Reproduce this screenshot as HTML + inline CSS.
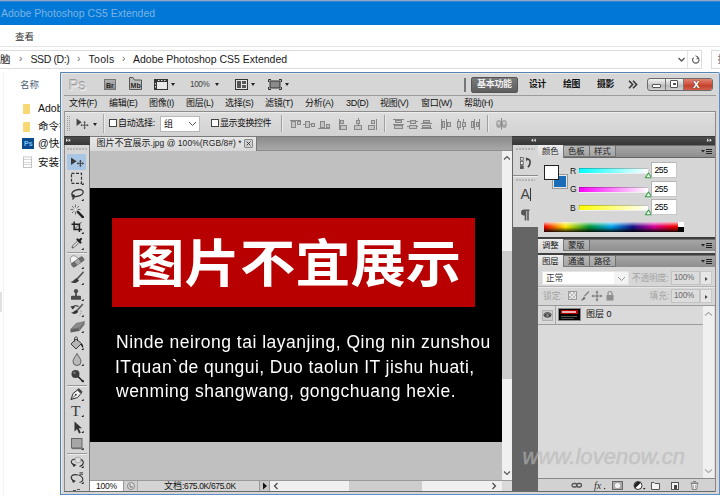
<!DOCTYPE html>
<html lang="zh-CN">
<head>
<meta charset="utf-8">
<title>Adobe Photoshop CS5 Extended</title>
<style>
*{box-sizing:border-box;margin:0;padding:0}
html,body{width:720px;height:496px;overflow:hidden;background:#fff}
body{position:relative;font-family:"Liberation Sans","Noto Sans CJK SC",sans-serif;font-size:12px;color:#000}
.a{position:absolute}
.t{position:absolute;white-space:nowrap;line-height:1}
/* explorer */
#topstrip{left:0;top:0;width:720px;height:2px;background:linear-gradient(#8fa9c4 0 1px,#2f86d6 1px 2px)}
#title{left:0;top:1px;width:720px;height:24px;background:#0078d7}
#title .t{left:1px;top:7px;font-size:10.5px;color:#7db3e4}
#menu .t{left:15px;top:31.6px;font-size:9.5px;color:#333}
#sep1{left:0;top:46px;width:720px;height:1px;background:#e6e6e6}
#addr{left:-2px;top:50px;width:704px;height:19px;border:1px solid #dcdcdc;background:#fff}
#addrdiv{left:687px;top:51px;width:1px;height:17px;background:#e4e4e4}
#search{left:711px;top:50px;width:20px;height:19px;border:1px solid #dcdcdc;background:#fff}
.crumb{top:54px;font-size:10.5px;color:#1a1a1a}
.chev{top:54px;font-size:10px;color:#666}
.li{left:38px;font-size:10.5px;color:#111}
/* photoshop */
#ps{left:60px;top:72px;width:660px;height:423px;background:#d6d6d6;border:1px solid #5f8fc4;border-top-color:#5384b4;border-left-color:#4a82c0;border-radius:0 2px 0 0;box-shadow:inset 1px 1px 0 #ece8e4}
.mi{top:99px;font-size:9px;color:#111;letter-spacing:-0.3px}
.ws{font-size:8.8px;letter-spacing:-0.3px;color:#111;font-weight:bold}
.lat{will-change:transform;font-size:17.5px;letter-spacing:0.5px;color:#fff;font-family:'Liberation Sans',sans-serif}
.sl{left:579px;width:69px;height:4.600px;box-shadow:inset 0 0.800px 0 rgba(0,0,0,0.320),inset 0.600px 0 0 rgba(0,0,0,0.200),0 0.800px 0 #f4f4f4}
.nb{left:651px;width:26px;height:16px;background:#fff;border:1px solid #b4b4b4;border-bottom-color:#c8c8c8;border-right-color:#c8c8c8}
.nbt{left:654.5px;font-size:8.6px;letter-spacing:-0.45px;color:#000}
.tri{width:0;height:0;border-left:2.7px solid transparent;border-right:2.7px solid transparent;border-top:3.5px solid #222;margin-left:0.3px}
.tabtxt{font-size:8.4px;color:#222}
</style>
</head>
<body>
<!-- Explorer window behind -->
<div class="a" id="title"><span class="t">Adobe Photoshop CS5 Extended</span></div>
<div class="a" id="topstrip"></div>
<div id="menu"><span class="t">查看</span></div>
<div class="a" id="sep1"></div>
<div class="a" id="addr"></div>
<div class="a" id="addrdiv"></div>
<div class="a" id="search"></div>
<span class="t" style="left:717.5px;top:55px;font-size:10px;color:#777">搜索</span>
<span class="t crumb" style="left:0px">脑</span>
<span class="t chev" style="left:19px">›</span>
<span class="t crumb" style="left:30.5px;letter-spacing:-0.4px">SSD (D:)</span>
<span class="t chev" style="left:77px">›</span>
<span class="t crumb" style="left:88.5px;letter-spacing:0.3px">Tools</span>
<span class="t chev" style="left:122px">›</span>
<span class="t crumb" style="left:133px">Adobe Photoshop CS5 Extended</span>
<svg class="a" style="left:676px;top:55px" width="26" height="10" viewBox="0 0 26 10"><path d="M2.5 3 L5.5 6 L8.5 3" fill="none" stroke="#555" stroke-width="1.3"/><path d="M21.5 2.2 A3.2 3.2 0 1 1 17.6 2.6" fill="none" stroke="#555" stroke-width="1.1"/><path d="M19.5 0.8 L22 2 L20.8 4.3" fill="none" stroke="#555" stroke-width="1"/></svg>
<span class="t" style="left:20px;top:80px;font-size:9.5px;color:#4c607a">名称</span>
<div class="a" style="left:23px;top:104px;width:7px;height:10px;background:#f7d873;border-radius:1px"></div>
<span class="t li" style="top:103px">Adobe</span>
<div class="a" style="left:23px;top:122px;width:7px;height:10px;background:#f7d873;border-radius:1px"></div>
<span class="t li" style="top:121px">命令行</span>
<div class="a" style="left:22px;top:138px;width:12px;height:11px;background:#0c4a8e"><span class="t" style="left:2px;top:2px;font-size:7px;color:#7cc4f5;font-weight:bold">Ps</span></div>
<span class="t li" style="top:138px">@快速</span>
<div class="a" style="left:23px;top:156px;width:9px;height:12px;background:repeating-linear-gradient(#fff 0 1.500px,#d8d8d8 1.500px 2.500px);border:1px solid #c4c4c4;border-top-width:2px;border-top-color:#e4e4e4"></div>
<span class="t li" style="top:157px">安装说明</span>
<div class="a" style="left:0;top:292px;width:2px;height:20px;background:#e0e0e0"></div>
<div class="a" style="left:3px;top:72px;width:1px;height:424px;background:#f4f4f4"></div>

<!-- Photoshop window -->
<div class="a" id="ps"></div>
<!-- app bar -->
<div class="a" style="left:64px;top:95px;width:652px;height:1px;background:#9c9c9c"></div>
<span class="t" style="left:68.800px;top:77.300px;font-size:15px;color:#c8c8c8;letter-spacing:-0.300px;text-shadow:-0.600px -0.600px 0 #9a9a9a,0.700px 0.700px 0 #f2f2f2">Ps</span>
<div class="a" style="left:104px;top:79px;width:12px;height:11px;background:linear-gradient(#b2b2b2,#8a8a8a);border:1px solid #767676"><span class="t" style="left:1px;top:1.5px;font-size:7px;font-weight:bold;color:#2a2a2a">Br</span></div>
<svg class="a" style="left:129px;top:77px" width="14" height="13" viewBox="0 0 14 13"><path d="M0.5 12.5 V0.5 H4 L5.5 3 H12.5 V12.5 Z" fill="#bdbdbd" stroke="#555" stroke-width="1"/><text x="1.6" y="10.6" font-family="Liberation Sans, sans-serif" font-size="7" font-weight="bold" fill="#2a2a2a">Mb</text></svg>
<svg class="a" style="left:154px;top:79px" width="14" height="11" viewBox="0 0 14 11"><rect x="0.5" y="0.5" width="13" height="10" fill="#e8e8e8" stroke="#333" stroke-width="1"/><rect x="0" y="0" width="14" height="3" fill="#333"/><rect x="0" y="0" width="3" height="11" fill="#333"/><rect x="1" y="4" width="1" height="1.5" fill="#ddd"/><rect x="1" y="7" width="1" height="1.5" fill="#ddd"/><rect x="4" y="1" width="1.5" height="1" fill="#ddd"/><rect x="7" y="1" width="1.5" height="1" fill="#ddd"/><rect x="10" y="1" width="1.5" height="1" fill="#ddd"/></svg>
<div class="a tri" style="left:171px;top:83px"></div>
<span class="t" style="left:190px;top:80.500px;font-size:8.200px;letter-spacing:-0.400px;color:#444">100%</span>
<div class="a tri" style="left:215px;top:83px"></div>
<svg class="a" style="left:235px;top:79px" width="13" height="11" viewBox="0 0 13 11"><rect x="0.5" y="0.5" width="12" height="10" fill="#e4e4e4" stroke="#333"/><rect x="2" y="2" width="4" height="7" fill="#555"/><rect x="7" y="2" width="4" height="3" fill="#555"/><rect x="7" y="6" width="4" height="3" fill="#555"/></svg>
<div class="a tri" style="left:251px;top:83px"></div>
<svg class="a" style="left:268px;top:79px" width="14" height="11" viewBox="0 0 14 11"><rect x="2" y="2" width="10" height="7" fill="#8a8a8a" stroke="#333"/><path d="M0.5 3V0.5H3 M11 0.5H13.5V3 M13.5 8V10.5H11 M3 10.5H0.5V8" fill="none" stroke="#333"/></svg>
<div class="a tri" style="left:285px;top:83px"></div>
<div class="a" style="left:464px;top:78px;width:2px;height:14px;background:#777"></div>
<div class="a" style="left:471px;top:77px;width:47px;height:16px;background:linear-gradient(#7a7a7a,#5e5e5e);border:1px solid #555;border-radius:2px"></div>
<span class="t ws" style="left:477px;top:80px;color:#f2f2f2;font-size:9px;letter-spacing:-0.300px">基本功能</span>
<span class="t ws" style="left:529px;top:80px">设计</span>
<span class="t ws" style="left:563px;top:80px">绘图</span>
<span class="t ws" style="left:597px;top:80px">摄影</span>
<svg class="a" style="left:628px;top:80px" width="10" height="9" viewBox="0 0 10 9"><path d="M1 0.8 L4.6 4.5 L1 8.2 M5 0.8 L8.6 4.5 L5 8.2" fill="none" stroke="#333" stroke-width="1.5"/></svg>
<!-- window buttons -->
<div class="a" style="left:647px;top:78px;width:66px;height:13px;border:1px solid #6b6b6b;border-radius:3px;background:linear-gradient(#f4f4f4,#c9c9c9 50%,#b4b4b4 50%,#d0d0d0)"></div>
<div class="a" style="left:683px;top:79px;width:29px;height:11px;border-radius:0 2px 2px 0;background:linear-gradient(#e0826f,#d0503c 50%,#c03a26 50%,#d2604a)"></div>
<div class="a" style="left:665px;top:79px;width:1px;height:11px;background:#777"></div>
<div class="a" style="left:683px;top:79px;width:1px;height:11px;background:#777"></div>
<div class="a" style="left:652px;top:84px;width:9px;height:4px;background:#fff;border:1px solid #555;border-radius:1px"></div>
<div class="a" style="left:670px;top:80px;width:8px;height:8px;background:#fff;border:1px solid #555;border-radius:1px"></div>
<div class="a" style="left:673px;top:83px;width:3px;height:2px;background:#555"></div>
<span class="t" style="left:693px;top:78px;font-size:12px;font-weight:bold;color:#fff;text-shadow:0 0 1px #5a2018,0 0 1px #5a2018">x</span>
<!-- menu bar -->
<span class="t mi" style="left:69px">文件(F)</span>
<span class="t mi" style="left:109px">编辑(E)</span>
<span class="t mi" style="left:149px">图像(I)</span>
<span class="t mi" style="left:186px">图层(L)</span>
<span class="t mi" style="left:225px">选择(S)</span>
<span class="t mi" style="left:265px">滤镜(T)</span>
<span class="t mi" style="left:305px">分析(A)</span>
<span class="t mi" style="left:346px">3D(D)</span>
<span class="t mi" style="left:380px">视图(V)</span>
<span class="t mi" style="left:421px">窗口(W)</span>
<span class="t mi" style="left:464px">帮助(H)</span>
<!-- options bar -->
<div class="a" style="left:64px;top:111px;width:652px;height:25px;background:linear-gradient(#dedede,#d2d2d2);border-top:1px solid #8c8c8c;border-left:1px solid #9a9a9a;border-right:1px solid #9a9a9a"></div>
<div class="a" style="left:65px;top:112px;width:650px;height:1px;background:#ececec"></div>
<div class="a" style="left:67px;top:116px;width:1px;height:16px;background:repeating-linear-gradient(#999 0 1px,transparent 1px 2px)"></div>
<div class="a" style="left:69px;top:116px;width:1px;height:16px;background:repeating-linear-gradient(#999 0 1px,transparent 1px 2px)"></div>
<svg class="a" style="left:75.500px;top:118px" width="13" height="11" viewBox="0 0 15 13"><path d="M0.5 0.5 V9.5 L6.5 5 Z" fill="#444"/><path d="M10 4.5 V12.5 M6 8.5 H14" stroke="#444" stroke-width="1" fill="none"/><path d="M10 3.6 L8.6 5.4 H11.4Z M10 13 L8.6 11.4 H11.4Z M5.2 8.5 L6.9 7.2 V9.8Z M14.8 8.5 L13.1 7.2 V9.8Z" fill="#444"/></svg>
<div class="a tri" style="left:93px;top:123px;border-left-width:2.5px;border-right-width:2.5px;border-top-width:3px"></div>
<div class="a" style="left:103px;top:114px;width:1px;height:19px;background:#aaa"></div>
<div class="a" style="left:104px;top:114px;width:1px;height:19px;background:#ececec"></div>
<div class="a" style="left:109px;top:119px;width:8px;height:8px;background:#fff;border:1px solid #444"></div>
<span class="t" style="left:118px;top:119px;font-size:9px;letter-spacing:-0.3px;color:#111">自动选择:</span>
<div class="a" style="left:160px;top:116px;width:40px;height:16px;background:#fff;border:1px solid #b8b8b8"></div>
<span class="t" style="left:164px;top:120px;font-size:9px;color:#111">组</span>
<svg class="a" style="left:188px;top:121px" width="9" height="6" viewBox="0 0 9 6"><path d="M1 1 L4.5 4.5 L8 1" fill="none" stroke="#555" stroke-width="1"/></svg>
<div class="a" style="left:211px;top:119px;width:8px;height:8px;background:#fff;border:1px solid #444"></div>
<span class="t" style="left:220px;top:119px;font-size:9px;letter-spacing:-0.5px;color:#111">显示变换控件</span>
<div class="a" style="left:281px;top:115px;width:1px;height:17px;background:#a0a0a0"></div>
<div class="a" style="left:282px;top:115px;width:1px;height:17px;background:#eaeaea"></div>
<div class="a" style="left:384px;top:115px;width:1px;height:17px;background:#a0a0a0"></div>
<div class="a" style="left:385px;top:115px;width:1px;height:17px;background:#eaeaea"></div>
<div class="a" style="left:487px;top:115px;width:1px;height:17px;background:#a0a0a0"></div>
<div class="a" style="left:488px;top:115px;width:1px;height:17px;background:#eaeaea"></div>
<svg class="a" style="left:288px;top:117px" width="224" height="14" viewBox="0 0 224 14" shape-rendering="crispEdges">
<g fill="#c4c4c4" stroke="#888" stroke-width="1">
<!-- align top -->
<path d="M2 3.5H13" fill="none"/><rect x="3.5" y="4.5" width="4" height="6"/><rect x="9.5" y="4.5" width="3" height="3"/>
<!-- align vcenter -->
<path d="M15 7.5H27" fill="none"/><rect x="17.500" y="4.500" width="4" height="6"/><rect x="23.500" y="6" width="3" height="3"/>
<!-- align bottom -->
<path d="M30 11.500H42" fill="none"/><rect x="32.500" y="4.500" width="4" height="6"/><rect x="38.500" y="7.500" width="3" height="3"/>
<!-- align left -->
<path d="M51.500 2V13" fill="none"/><rect x="52.500" y="3.500" width="3" height="3"/><rect x="52.500" y="8.500" width="6" height="4"/>
<!-- align hcenter -->
<path d="M70 1V13" fill="none"/><rect x="68.500" y="3.500" width="3" height="3"/><rect x="66.500" y="8.500" width="7" height="4"/>
<!-- align right -->
<path d="M88 2V13" fill="none"/><rect x="83.500" y="3.500" width="3" height="3"/><rect x="80.500" y="8.500" width="6" height="4"/>
<!-- distribute top -->
<path d="M105 2.500H116 M105 7.500H116" fill="none"/><rect x="107.500" y="3.500" width="6" height="2"/><rect x="106.500" y="8.500" width="8" height="3"/>
<!-- distribute vcenter -->
<path d="M119 4.500H130 M119 9.500H130" fill="none"/><rect x="122" y="3" width="5" height="3"/><rect x="121" y="8" width="7" height="3"/>
<!-- distribute bottom -->
<path d="M133 6.500H144 M133 11.500H144" fill="none"/><rect x="135.500" y="3.500" width="6" height="2"/><rect x="134.500" y="8.500" width="8" height="2"/>
<!-- distribute left -->
<path d="M153.500 2V13 M158.500 2V13" fill="none"/><rect x="154.500" y="4.500" width="2" height="6"/><rect x="159.500" y="5.500" width="3" height="4"/>
<!-- distribute hcenter -->
<path d="M170.500 2V13 M175.500 2V13" fill="none"/><rect x="169" y="4.500" width="3" height="6"/><rect x="174" y="5.500" width="3" height="4"/>
<!-- distribute right -->
<path d="M186.500 2V13 M191.500 2V13" fill="none"/><rect x="183.500" y="4.500" width="2" height="6"/><rect x="188.500" y="5.500" width="2" height="4"/>
</g>
<g shape-rendering="auto"><ellipse cx="210.800" cy="7" rx="2.700" ry="4" fill="#a4a4a4"/><ellipse cx="216.200" cy="7" rx="2.700" ry="4" fill="#a4a4a4"/><ellipse cx="210.800" cy="6" rx="1.300" ry="1.500" fill="#d0d0d0"/><ellipse cx="216.200" cy="6" rx="1.300" ry="1.500" fill="#d0d0d0"/><path d="M213.500 1V12.500" stroke="#777" stroke-width="0.800"/></g>
</svg>

<!-- headers & tab bar -->
<div class="a" style="left:64px;top:136px;width:26px;height:9px;background:linear-gradient(#4c4c4c,#363636);border-top:1px solid #3a3a3a"></div>
<svg class="a" style="left:66px;top:138px" width="6" height="5" viewBox="0 0 6 5"><path d="M0 0.500L2.200 2.300L0 4.100Z M2.600 0.500L4.800 2.300L2.600 4.100Z" fill="#ddd"/></svg>
<div class="a" style="left:90px;top:136px;width:422px;height:15px;background:linear-gradient(#8c8c8c,#a8a8a8);border-top:1px solid #7a7a7a;border-bottom:1px solid #8e8e8e"></div>
<div class="a" style="left:90px;top:137px;width:167px;height:14px;background:linear-gradient(#e8e8e8,#d8d8d8);border-right:1px solid #777"></div>
<span class="t" style="left:96.5px;top:139px;font-size:9px;color:#222">图片不宜展示<span style="font-size:8.5px;letter-spacing:0.04px">.jpg @ 100%(RGB/8#) *</span></span>
<div class="a" style="left:244px;top:139px;width:9px;height:9px;border:1px solid #8a8a8a;background:#d2d2d2;border-radius:1px"></div>
<svg class="a" style="left:244px;top:139px" width="9" height="9" viewBox="0 0 9 9"><path d="M2.500 2.500L6.500 6.500M6.500 2.500L2.500 6.500" stroke="#333" stroke-width="0.900"/></svg>

<!-- canvas -->
<div class="a" style="left:89.500px;top:151px;width:412px;height:329px;background:#c0c0c0"></div>
<div class="a" style="left:89.500px;top:188px;width:412px;height:254px;background:#000"></div>
<div class="a" style="left:112px;top:218px;width:363px;height:89px;background:#b90000"></div>
<span class="t" id="big" style="left:129.3px;top:239px;font-size:55.300px;transform:scaleY(0.925);transform-origin:0 0;font-weight:bold;color:#fff;font-family:'Liberation Sans','Noto Sans CJK SC',sans-serif">图片不宜展示</span>
<span class="t lat" style="left:115.5px;top:334.4px">Ninde neirong tai layanjing, Qing nin zunshou</span>
<span class="t lat" style="left:115px;top:358.6px;letter-spacing:0.44px">ITquan`de qungui, Duo taolun IT jishu huati,</span>
<span class="t lat" style="left:116px;top:382.8px">wenming shangwang, gongchuang hexie.</span>
<!-- v scrollbar -->
<div class="a" style="left:501.500px;top:151px;width:10.500px;height:329px;background:#f0f0f0"></div>
<div class="a" style="left:501.500px;top:251px;width:10.500px;height:127.500px;background:#cdcdcd"></div>
<svg class="a" style="left:503px;top:155px" width="8" height="6" viewBox="0 0 8 6"><path d="M1 4.500L4 1.500L7 4.500" fill="none" stroke="#555" stroke-width="1.200"/></svg>
<svg class="a" style="left:503px;top:470px" width="8" height="6" viewBox="0 0 8 6"><path d="M1 1.500L4 4.500L7 1.500" fill="none" stroke="#555" stroke-width="1.200"/></svg>
<!-- status bar -->
<div class="a" style="left:90px;top:480px;width:422px;height:11px;background:#d4d4d4;border-top:1px solid #9a9a9a"></div>
<div class="a" style="left:90px;top:481px;width:34px;height:10px;background:#fff;border-right:1px solid #999"></div>
<span class="t" style="left:96px;top:482px;font-size:8.500px;letter-spacing:-0.200px;color:#111">100%</span>
<div class="a" style="left:124px;top:481px;width:14px;height:10px;background:#d0d0d0;border-right:1px solid #aaa"></div>
<svg class="a" style="left:126px;top:481px" width="10" height="10" viewBox="0 0 10 10"><circle cx="5" cy="5" r="3.500" fill="#ddd" stroke="#888"/><path d="M4 3V6H7" fill="none" stroke="#777"/></svg>
<span class="t" style="left:164px;top:482px;font-size:9px;color:#111">文档<span style="font-size:8.500px;letter-spacing:-0.350px">:675.0K/675.0K</span></span>
<div class="a" style="left:259px;top:481px;width:11px;height:10px;background:#c8c8c8;border-left:1px solid #999;border-right:1px solid #999"></div>
<svg class="a" style="left:262px;top:482px" width="6" height="8" viewBox="0 0 6 8"><path d="M1 0.500L5 4L1 7.500Z" fill="#111"/></svg>
<div class="a" style="left:270px;top:481px;width:232px;height:10px;background:#f0f0f0"></div>
<div class="a" style="left:349px;top:481px;width:73px;height:10px;background:#cdcdcd"></div>
<svg class="a" style="left:273px;top:482px" width="6" height="8" viewBox="0 0 6 8"><path d="M4.500 1L1.500 4L4.500 7" fill="none" stroke="#444" stroke-width="1.200"/></svg>
<svg class="a" style="left:491px;top:482px" width="6" height="8" viewBox="0 0 6 8"><path d="M1.500 1L4.500 4L1.500 7" fill="none" stroke="#444" stroke-width="1.200"/></svg>
<div class="a" style="left:502px;top:481px;width:10px;height:10px;background:#dadada"></div>

<!-- toolbox -->
<div class="a" style="left:64px;top:145px;width:26px;height:346px;background:#d6d6d6;border-left:1px solid #8a8a8a;border-right:1px solid #7c7c7c"></div>
<div class="a" style="left:67px;top:147.500px;width:20px;height:2px;background:repeating-linear-gradient(90deg,#b2b2b2 0 2px,transparent 2px 3px)"></div>
<svg class="a" style="left:64px;top:145px" width="26" height="346" viewBox="0 0 26 346"><rect x="3" y="9" width="19" height="16" fill="#a9c7e4"/><path d="M7 12.600V20L12.600 16.300Z" fill="#3a3a3a"/><path d="M16.400 15.600V21.200M13.600 18.400H19.200" stroke="#3a3a3a" stroke-width="0.900" fill="none"/><path d="M16.400 14.800L15.100 16.400H17.700Z M16.400 22L15.100 20.400H17.700Z M12.800 18.400L14.400 17.100V19.700Z M20 18.400L18.400 17.100V19.700Z" fill="#3a3a3a"/><rect x="7.500" y="28.300" width="10" height="10" fill="none" stroke="#333" stroke-width="1.200" stroke-dasharray="3 1.500"/><path d="M17.400 40L19.600 40L19.600 37.8Z" fill="#111"/><g transform="translate(7,44)" fill="none" stroke="#333" stroke-width="1.300"><ellipse cx="6.500" cy="4" rx="5.800" ry="3.300" transform="rotate(-14 6.500 4)"/><path d="M2.500 6.500C3.500 7.500 3 9 1.500 10.500"/><circle cx="2.200" cy="7" r="1" /></g><path d="M17.400 56L19.600 56L19.600 53.8Z" fill="#111"/><g transform="translate(6,59)"><path d="M7.800 7.800L12.600 12.800" stroke="#222" stroke-width="2.400" stroke-linecap="round"/><g stroke="#666" stroke-width="1"><path d="M5.500 0.500V3M5.500 8V10.500M0.500 5.500H3M8 5.500H10.500M2 2L3.700 3.700M9 2L7.300 3.700M2 9L3.700 7.300"/></g><circle cx="5.500" cy="5.500" r="1.600" fill="#eee" stroke="#999" stroke-width="0.600"/></g><path d="M17.400 73L19.600 73L19.600 70.8Z" fill="#111"/><g transform="translate(7.500,76.500) scale(0.880)" fill="none" stroke="#222" stroke-width="1.700"><path d="M3 0V9H12"/><path d="M0 3H9V12"/><path d="M11.500 0.500L3.500 8.500" stroke-width="0.800"/></g><path d="M17.400 89L19.600 89L19.600 86.8Z" fill="#111"/><g transform="translate(7,92)"><path d="M1 11L1.500 9L7 3.500L8.500 5L3 10.500Z" fill="#e6e6e6" stroke="#444" stroke-width="0.800"/><path d="M6.500 2.500L9.500 5.500M8 4L10 2" stroke="#222" stroke-width="2.200" stroke-linecap="round"/></g><path d="M17.400 105L19.600 105L19.600 102.8Z" fill="#111"/><path d="M3 107.500H23" stroke="#9a9a9a"/><path d="M3 108.500H23" stroke="#ececec"/><g transform="translate(5,110)"><ellipse cx="5.500" cy="5.500" rx="4" ry="5" fill="#f4f4f4" stroke="#888" stroke-width="0.800" transform="rotate(-30 5.500 5.500)"/><g transform="rotate(-35 8.500 7)"><rect x="2" y="4.800" width="13.500" height="4.600" rx="1.500" fill="#6e6e6e" stroke="#444" stroke-width="0.500"/><rect x="6.500" y="4.800" width="4.500" height="4.600" fill="#a8a8a8"/></g></g><path d="M17.400 124L19.600 124L19.600 121.8Z" fill="#111"/><g transform="translate(6,127)"><path d="M13 0.500L7.500 6.500" stroke="#555" stroke-width="1.800" stroke-linecap="round"/><path d="M0.500 10C3 10 4 7.500 6.500 6L9 8.500C7.500 11 3.500 12 0.500 10Z" fill="#3a3a3a"/></g><path d="M17.400 140L19.600 140L19.600 137.8Z" fill="#111"/><g transform="translate(6.500,144)" fill="#4a4a4a"><circle cx="5.500" cy="2.200" r="2.100"/><path d="M4.600 3.500H6.400V7.500H4.600Z"/><rect x="0.500" y="6.800" width="10" height="4" rx="0.900"/></g><path d="M17.400 156L19.600 156L19.600 153.8Z" fill="#111"/><g transform="translate(6,159)"><path d="M12.500 0.500L7.500 6" stroke="#555" stroke-width="1.600" stroke-linecap="round"/><path d="M1 8.500C3 8.800 4.200 7 6.300 5.800L8.300 7.800C7 10 3.500 10.800 1 8.500Z" fill="#333"/><path d="M2 3.500C4 1.500 7 1.500 8.500 2.500" fill="none" stroke="#333" stroke-width="1.200"/><path d="M0.500 2L2.500 5.500L5 3Z" fill="#333"/><path d="M11 6.500C11.500 9 10.500 10.500 9 11.500" fill="none" stroke="#888" stroke-width="0.800" stroke-dasharray="1.500 1"/></g><path d="M17.400 172L19.600 172L19.600 169.8Z" fill="#111"/><g transform="translate(6,176)"><path d="M0.500 8.500L6 2.500L14.500 0.500L9.500 7Z" fill="#8a8a8a" stroke="#555" stroke-width="0.500"/><path d="M0.500 8.500L9.500 7V10L0.500 11.500Z" fill="#5e5e5e"/><path d="M9.500 7L14.500 0.500V3.500L9.500 10Z" fill="#707070"/></g><path d="M17.400 188L19.600 188L19.600 185.8Z" fill="#111"/><g transform="translate(6,191)"><path d="M1 8L6 3L11.500 7.500L6 13Z" fill="#b5b5b5" stroke="#3c3c3c" stroke-width="1"/><path d="M4.500 5.500V2.500C4.500 0.500 7.500 0.500 7.500 2.500V5" fill="none" stroke="#333" stroke-width="1"/><path d="M11.500 7.500C13 8.500 13.500 10 13 12C12 11 11 9.500 10.500 8.500Z" fill="#222"/></g><path d="M17.400 205L19.600 205L19.600 202.8Z" fill="#111"/><g transform="translate(8,208)"><path d="M5 0.500C7 4 9 6 9 8.500A4 4 0 0 1 1 8.500C1 6 3 4 5 0.500Z" fill="#b8b8b8" stroke="#555" stroke-width="0.900"/></g><path d="M17.400 221L19.600 221L19.600 218.8Z" fill="#111"/><g transform="translate(7,224.500)"><circle cx="4.500" cy="4.500" r="4" fill="#3e3e3e"/><circle cx="3.500" cy="3.300" r="1.300" fill="#777"/><path d="M7.500 7.500L12 12" stroke="#222" stroke-width="1.600" stroke-linecap="round"/></g><path d="M17.400 237L19.600 237L19.600 234.8Z" fill="#111"/><path d="M3 240.500H23" stroke="#9a9a9a"/><path d="M3 241.500H23" stroke="#ececec"/><g transform="translate(6,243)"><path d="M1 11.500L3 5.500L7.500 2L11 5.500L7.500 9.500Z" fill="#f2f2f2" stroke="#333" stroke-width="1"/><path d="M7 1.500L9 0.300L12.500 3.800L11.300 5.800Z" fill="#444"/><path d="M1 11.500L5.500 7" stroke="#333" stroke-width="0.800"/><circle cx="5.800" cy="6.700" r="0.900" fill="#333"/></g><path d="M17.400 256L19.600 256L19.600 253.8Z" fill="#111"/><text x="7" y="271" font-family="Liberation Serif, serif" font-size="15.500" fill="#3a3a3a">T</text><path d="M17.400 272L19.600 272L19.600 269.8Z" fill="#111"/><g transform="translate(10,276)"><path d="M0.500 0.500V10.500L3 8L5 12.500L6.800 11.700L4.800 7.300H8Z" fill="#333"/></g><path d="M17.400 288L19.600 288L19.600 285.8Z" fill="#111"/><rect x="7.500" y="293.500" width="10.500" height="9.500" fill="#a6a6a6" stroke="#666" stroke-width="1"/><path d="M8 303.700H18.500" stroke="#555" stroke-width="0.800"/><path d="M17.400 305L19.600 305L19.600 302.8Z" fill="#111"/><path d="M3 308.500H23" stroke="#9a9a9a"/><path d="M3 309.500H23" stroke="#ececec"/><g transform="translate(6,311)"><circle cx="8" cy="4" r="3" fill="#dcdcdc" stroke="#888" stroke-width="0.600"/><path d="M5 3C1 3.500 0 6.500 3 8.500M11 3.500C14.500 5 14 9.500 9.500 10.500" fill="none" stroke="#333" stroke-width="1.100"/><path d="M2 7L6.500 9L3.500 11Z" fill="#333"/></g><path d="M17.400 323L19.600 323L19.600 320.8Z" fill="#111"/><g transform="translate(6,327)"><path d="M8 3C2 1.500 -0.500 5 2.500 8M8.500 3C13.500 4.500 14.500 9.500 9.500 10.500" fill="none" stroke="#333" stroke-width="1.100"/><path d="M1.500 7L6 9L3 11Z" fill="#333"/><path d="M9.500 0.800H13M9.500 2.300H13" stroke="#333" stroke-width="0.900"/></g><path d="M17.400 339L19.600 339L19.600 336.8Z" fill="#111"/><path d="M9 345.500H12M13 344.500H16" stroke="#555" stroke-width="1"/></svg>

<!-- right dock -->
<div class="a" style="left:512px;top:136px;width:203px;height:9px;background:linear-gradient(#4c4c4c,#363636);border-top:1px solid #3a3a3a"></div>
<svg class="a" style="left:530.500px;top:138px" width="6" height="5" viewBox="0 0 6 5"><path d="M2.200 0.500L0 2.300L2.200 4.100Z M4.800 0.500L2.600 2.300L4.800 4.100Z" fill="#ddd"/></svg>
<svg class="a" style="left:707px;top:138px" width="6" height="5" viewBox="0 0 6 5"><path d="M0 0.500L2.200 2.300L0 4.100Z M2.600 0.500L4.800 2.300L2.600 4.100Z" fill="#ddd"/></svg>
<div class="a" style="left:512px;top:145px;width:203px;height:346px;background:#656565"></div>
<div class="a" style="left:513px;top:145px;width:25px;height:82px;background:#d6d6d6"></div>
<div class="a" style="left:516px;top:148px;width:19px;height:2px;background:repeating-linear-gradient(90deg,#b2b2b2 0 2px,transparent 2px 3px)"></div>
<div class="a" style="left:513px;top:174.700px;width:25px;height:1px;background:#8a8a8a"></div>
<div class="a" style="left:513px;top:175.700px;width:25px;height:1px;background:#efefef"></div>
<div class="a" style="left:516px;top:179px;width:19px;height:2px;background:repeating-linear-gradient(90deg,#b2b2b2 0 2px,transparent 2px 3px)"></div>
<svg class="a" style="left:520px;top:157px" width="14" height="13" viewBox="0 0 14 13"><rect x="0.400" y="0.400" width="2.800" height="2.800" fill="#eee" stroke="#555" stroke-width="0.800"/><rect x="0.400" y="4.400" width="2.800" height="3.200" fill="#f4f4f4" stroke="#555" stroke-width="0.800"/><rect x="0.400" y="8.800" width="2.800" height="2.800" fill="#555" stroke="#555" stroke-width="0.800"/><path d="M7 2C10.500 2 11.500 6 8 10.200" fill="none" stroke="#444" stroke-width="1.600"/><path d="M5.800 0.300L8.800 2L6.300 4.200Z" fill="#444"/></svg>
<span class="t" style="left:520.500px;top:187px;font-size:14px;color:#444">A</span>
<div class="a" style="left:530px;top:188px;width:1px;height:13px;background:#333"></div>
<svg class="a" style="left:520px;top:209px" width="10" height="12" viewBox="0 0 10 12"><path d="M4 0.500H9.500V2H8.800V11.500H7.200V2H6.300V11.500H4.700V6.400H4A2.950 2.950 0 0 1 4 0.500Z" fill="#555"/></svg>
<!-- color panel -->
<div class="a" style="left:538px;top:145px;width:177px;height:12px;background:linear-gradient(#a6a6a6,#8e8e8e);border-top:1px solid #6e6e6e"></div>
<div class="a" style="left:538px;top:145px;width:26px;height:13px;background:linear-gradient(#ececec,#d6d6d6);border-right:1px solid #777"></div>
<span class="t tabtxt" style="left:542px;top:147px">颜色</span>
<div class="a" style="left:564px;top:146px;width:26px;height:11px;background:linear-gradient(#b8b8b8,#a4a4a4);border-right:1px solid #707070;border-bottom:1px solid #7a7a7a"></div>
<span class="t tabtxt" style="left:568px;top:147px">色板</span>
<div class="a" style="left:590px;top:146px;width:26px;height:11px;background:linear-gradient(#b8b8b8,#a4a4a4);border-right:1px solid #707070;border-bottom:1px solid #7a7a7a"></div>
<span class="t tabtxt" style="left:594px;top:147px">样式</span>
<svg class="a" style="left:701px;top:148px" width="11" height="7" viewBox="0 0 11 7"><path d="M0 2H4L2 4.500Z" fill="#222"/><path d="M5 1.500H11M5 3.500H11M5 5.500H11" stroke="#222" stroke-width="1"/></svg>
<div class="a" style="left:538px;top:158px;width:177px;height:79px;background:#d6d6d6"></div>
<div class="a" style="left:553px;top:175px;width:14px;height:13px;background:#1b6cb8;border:1px solid #e8e8e8;outline:1px solid #999"></div>
<div class="a" style="left:544px;top:165px;width:15px;height:15px;background:#fff;border:1px solid #222"></div>
<span class="t" style="left:570px;top:167px;font-size:8.500px;color:#111">R</span>
<span class="t" style="left:570px;top:185px;font-size:8.500px;color:#111">G</span>
<span class="t" style="left:570px;top:204px;font-size:8.500px;color:#111">B</span>
<div class="a sl" style="top:168px;background:linear-gradient(90deg,#00ffff,#ffffff)"></div>
<div class="a sl" style="top:187px;background:linear-gradient(90deg,#ff00ff,#ffffff)"></div>
<div class="a sl" style="top:205px;background:linear-gradient(90deg,#ffff00,#ffffff)"></div>
<svg class="a" style="left:643.500px;top:171.5px" width="9" height="7" viewBox="0 0 9 7"><path d="M4.500 1L7.600 5.700H1.400Z" fill="#f4fff4" stroke="#35a044" stroke-width="1.100" stroke-linejoin="round"/></svg>
<svg class="a" style="left:643.500px;top:190.5px" width="9" height="7" viewBox="0 0 9 7"><path d="M4.500 1L7.600 5.700H1.400Z" fill="#f4fff4" stroke="#35a044" stroke-width="1.100" stroke-linejoin="round"/></svg>
<svg class="a" style="left:643.500px;top:208.5px" width="9" height="7" viewBox="0 0 9 7"><path d="M4.500 1L7.600 5.700H1.400Z" fill="#f4fff4" stroke="#35a044" stroke-width="1.100" stroke-linejoin="round"/></svg>
<div class="a nb" style="top:162px"></div><span class="t nbt" style="top:166px">255</span>
<div class="a nb" style="top:181px"></div><span class="t nbt" style="top:185px">255</span>
<div class="a nb" style="top:199px"></div><span class="t nbt" style="top:203px">255</span>
<div class="a" style="left:544px;top:222px;width:134px;height:10px;background:linear-gradient(rgba(255,255,255,0.750),rgba(255,255,255,0) 45%,rgba(0,0,0,0) 50%,rgba(0,0,0,0.880)),linear-gradient(90deg,#f00000,#ffe800 16%,#009838 34%,#00a8f0 50%,#141488 66%,#d80098 82%,#f00000 97%)"></div>
<div class="a" style="left:678px;top:222px;width:6px;height:5px;background:#fff"></div>
<div class="a" style="left:678px;top:227px;width:6px;height:5px;background:#000"></div>
<!-- adjustments panel -->
<div class="a" style="left:538px;top:237px;width:177px;height:2px;background:#3e3e3e"></div>
<div class="a" style="left:538px;top:239px;width:177px;height:12px;background:linear-gradient(#a6a6a6,#8e8e8e);border-top:1px solid #6e6e6e"></div>
<div class="a" style="left:538px;top:239px;width:26px;height:13px;background:linear-gradient(#ececec,#d6d6d6);border-right:1px solid #777"></div>
<span class="t tabtxt" style="left:542px;top:241px">调整</span>
<div class="a" style="left:564px;top:240px;width:26px;height:11px;background:linear-gradient(#b8b8b8,#a4a4a4);border-right:1px solid #707070;border-bottom:1px solid #7a7a7a"></div>
<span class="t tabtxt" style="left:568px;top:241px">蒙版</span>
<svg class="a" style="left:701px;top:242px" width="11" height="7" viewBox="0 0 11 7"><path d="M0 2H4L2 4.500Z" fill="#222"/><path d="M5 1.500H11M5 3.500H11M5 5.500H11" stroke="#222" stroke-width="1"/></svg>
<div class="a" style="left:538px;top:251px;width:177px;height:3px;background:#d6d6d6"></div>
<div class="a" style="left:538px;top:253px;width:177px;height:2px;background:#3e3e3e"></div>
<!-- layers panel -->
<div class="a" style="left:538px;top:255px;width:177px;height:12px;background:linear-gradient(#a6a6a6,#8e8e8e);border-top:1px solid #6e6e6e"></div>
<div class="a" style="left:538px;top:255px;width:26px;height:13px;background:linear-gradient(#ececec,#d6d6d6);border-right:1px solid #777"></div>
<span class="t tabtxt" style="left:542px;top:257px">图层</span>
<div class="a" style="left:564px;top:256px;width:26px;height:11px;background:linear-gradient(#b8b8b8,#a4a4a4);border-right:1px solid #707070;border-bottom:1px solid #7a7a7a"></div>
<span class="t tabtxt" style="left:568px;top:257px">通道</span>
<div class="a" style="left:590px;top:256px;width:26px;height:11px;background:linear-gradient(#b8b8b8,#a4a4a4);border-right:1px solid #707070;border-bottom:1px solid #7a7a7a"></div>
<span class="t tabtxt" style="left:594px;top:257px">路径</span>
<svg class="a" style="left:701px;top:258px" width="11" height="7" viewBox="0 0 11 7"><path d="M0 2H4L2 4.500Z" fill="#222"/><path d="M5 1.500H11M5 3.500H11M5 5.500H11" stroke="#222" stroke-width="1"/></svg>
<div class="a" style="left:538px;top:267px;width:177px;height:224px;background:#d6d6d6"></div>
<div class="a" style="left:542px;top:271px;width:87px;height:14px;background:#fff;border:1px solid #e4e4e4"></div>
<div class="a" style="left:614px;top:272px;width:14px;height:12px;background:#f3f3f3"></div>
<svg class="a" style="left:617px;top:276px" width="9" height="6" viewBox="0 0 9 6"><path d="M1 1L4.500 4.500L8 1" fill="none" stroke="#999" stroke-width="1"/></svg>
<span class="t" style="left:546px;top:274px;font-size:8.600px;color:#3c3c3c">正常</span>
<span class="t" style="left:632px;top:274px;font-size:8.700px;letter-spacing:-0.200px;color:#a2a2a2">不透明度:</span>
<div class="a" style="left:671px;top:271px;width:29px;height:14px;background:#dcdcdc;border:1px solid #c2c2c2"></div>
<span class="t" style="left:674px;top:274px;font-size:8.200px;letter-spacing:-0.200px;color:#6a6a6a">100%</span>
<div class="a" style="left:700px;top:271px;width:12px;height:14px;background:#e6e6e6;border:1px solid #c8c8c8"></div>
<svg class="a" style="left:704px;top:275.500px" width="5" height="6" viewBox="0 0 5 6"><path d="M1 1L3.600 3L1 5Z" fill="#444"/></svg>
<div class="a" style="left:538px;top:286px;width:177px;height:1px;background:#b4b4b4"></div>
<div class="a" style="left:538px;top:287px;width:177px;height:1px;background:#e8e8e8"></div>
<span class="t" style="left:543px;top:292px;font-size:8.700px;color:#a4a4a4">锁定:</span>
<svg class="a" style="left:567px;top:290px;opacity:0.750" width="48" height="12" viewBox="0 0 48 12">
<rect x="1.500" y="1.500" width="8" height="8" fill="#f0f0f0" stroke="#888"/><path d="M2 2H4V4H2Z M6 2H8V4H6Z M4 4H6V6H4Z M8 4H9V6H8Z M2 6H4V8H2Z M6 6H8V8H6Z M4 8H6V9H4Z" fill="#b8b8b8"/>
<path d="M22 1.500L17.500 6" stroke="#666" stroke-width="1.300"/><path d="M13.500 10C15 10 15.500 8 17 6.500L18.500 8C17.500 10 15.500 11 13.500 10Z" fill="#555"/>
<path d="M30 1.500V10.500M25.500 6H34.500" stroke="#555" stroke-width="1"/><path d="M30 0.500L28.500 2.500H31.500Z M30 11.500L28.500 9.500H31.500Z M24.500 6L26.500 4.500V7.500Z M35.500 6L33.500 4.500V7.500Z" fill="#555"/>
<rect x="39.500" y="5" width="7" height="5.500" fill="#777"/><path d="M41 5V3.500A2 2 0 0 1 45 3.500V5" fill="none" stroke="#777" stroke-width="1.200"/>
</svg>
<span class="t" style="left:649.500px;top:292px;font-size:8.700px;color:#a4a4a4">填充:</span>
<div class="a" style="left:671px;top:289px;width:29px;height:14px;background:#dcdcdc;border:1px solid #c2c2c2"></div>
<span class="t" style="left:674px;top:292px;font-size:8.200px;letter-spacing:-0.200px;color:#6a6a6a">100%</span>
<div class="a" style="left:700px;top:289px;width:12px;height:14px;background:#e6e6e6;border:1px solid #c8c8c8"></div>
<svg class="a" style="left:704px;top:293.500px" width="5" height="6" viewBox="0 0 5 6"><path d="M1 1L3.600 3L1 5Z" fill="#444"/></svg>
<div class="a" style="left:538px;top:304.500px;width:177px;height:1px;background:#9a9a9a"></div>
<div class="a" style="left:538px;top:305.500px;width:165px;height:172.500px;background:#dadada"></div>
<div class="a" style="left:538px;top:324px;width:165px;height:1px;background:#9c9c9c"></div>
<div class="a" style="left:555px;top:305.500px;width:1px;height:18.500px;background:#a8a8a8"></div>
<div class="a" style="left:542px;top:309.500px;width:11px;height:11px;background:#ccc;border:1px solid #b0b0b0"></div>
<svg class="a" style="left:543px;top:311.500px" width="9" height="7" viewBox="0 0 9 7"><path d="M0.500 3.500C2.500 0.500 6.500 0.500 8.500 3.500C6.500 6.500 2.500 6.500 0.500 3.500Z" fill="#444"/><circle cx="4.500" cy="3.500" r="1.300" fill="#999"/><path d="M0.500 2.500C2.500 0 6.500 0 8.500 2.500" fill="none" stroke="#222" stroke-width="0.800"/></svg>
<div class="a" style="left:558px;top:308px;width:23px;height:13px;background:#000;border:1px solid #888"></div>
<div class="a" style="left:561px;top:310px;width:17px;height:4px;background:#b90000"></div>
<div class="a" style="left:562px;top:311px;width:14px;height:2px;background:#e8b0b0"></div>
<div class="a" style="left:561px;top:316px;width:16px;height:1px;background:#555"></div>
<div class="a" style="left:561px;top:318px;width:13px;height:1px;background:#444"></div>
<span class="t" style="left:586px;top:310px;font-size:9px;color:#111">图层 0</span>
<!-- layers scrollbar -->
<div class="a" style="left:703px;top:305.500px;width:11px;height:172.500px;background:#f0f0f0"></div><div class="a" style="left:714px;top:305.500px;width:1px;height:172.500px;background:#dcdcdc"></div>
<svg class="a" style="left:704px;top:310.500px" width="9" height="6" viewBox="0 0 9 6"><path d="M1 4.500L4.500 1.500L8 4.500" fill="none" stroke="#aaa" stroke-width="1.100"/></svg>
<svg class="a" style="left:704px;top:468px" width="9" height="6" viewBox="0 0 9 6"><path d="M1 1.500L4.500 4.500L8 1.500" fill="none" stroke="#aaa" stroke-width="1.100"/></svg>
<!-- layers bottom bar -->
<div class="a" style="left:538px;top:478px;width:177px;height:1px;background:#8a8a8a"></div>
<div class="a" style="left:538px;top:479px;width:177px;height:12px;background:#d2d2d2"></div>
<svg class="a" style="left:570px;top:480px" width="130" height="11" viewBox="0 0 130 11">
<g fill="none" stroke="#555" stroke-width="1.300"><rect x="2" y="3.500" width="5" height="3.500" rx="1.700"/><rect x="6.500" y="3.500" width="5" height="3.500" rx="1.700"/></g>
<text x="24" y="8.500" font-family="Liberation Serif, serif" font-style="italic" font-size="10" fill="#333">fx</text><rect x="34" y="8" width="1.200" height="1.200" fill="#333"/>
<rect x="42.500" y="1.500" width="10" height="8" fill="#aaa" stroke="#666"/><circle cx="47.500" cy="5.500" r="2.600" fill="#f2f2f2"/>
<circle cx="68" cy="5.500" r="4" fill="#fff" stroke="#333"/><path d="M65.200 8.300A4 4 0 0 1 70.800 2.700Z" fill="#222"/><path d="M73 8H75.500L74.200 9.800Z" fill="#222"/>
<path d="M81.500 9.500V2.500H84L85 3.500H89.500V9.500Z" fill="#f4f4f4" stroke="#555"/>
<rect x="101.500" y="2.500" width="7" height="7" fill="#f4f4f4" stroke="#555"/><path d="M104 5H107V9H104Z" fill="#444"/>
<g transform="translate(-2,0)"><path d="M123.500 3.500L124.300 9.500H128.700L129.500 3.500Z" fill="#eee" stroke="#777" stroke-width="0.900"/><path d="M122.500 3H130.500M125 1.500H128" stroke="#777" stroke-width="0.900"/><path d="M125.500 5V8.500M127.500 5V8.500" stroke="#999" stroke-width="0.700"/></g>
</svg>
<!-- watermark -->
<span class="t" id="wm" style="left:522.5px;top:446px;font-size:22px;font-style:italic;color:#b8b8b8;opacity:0.62;-webkit-text-stroke:0.55px #b8b8b8;letter-spacing:0.08px">www.lovenow.cn</span>
<!-- window frame bottom/right -->
<div class="a" style="left:64px;top:491px;width:652px;height:1px;background:#6a6a6a"></div>
<div class="a" style="left:715px;top:111px;width:1px;height:381px;background:#8a8a8a"></div>

</body>
</html>
